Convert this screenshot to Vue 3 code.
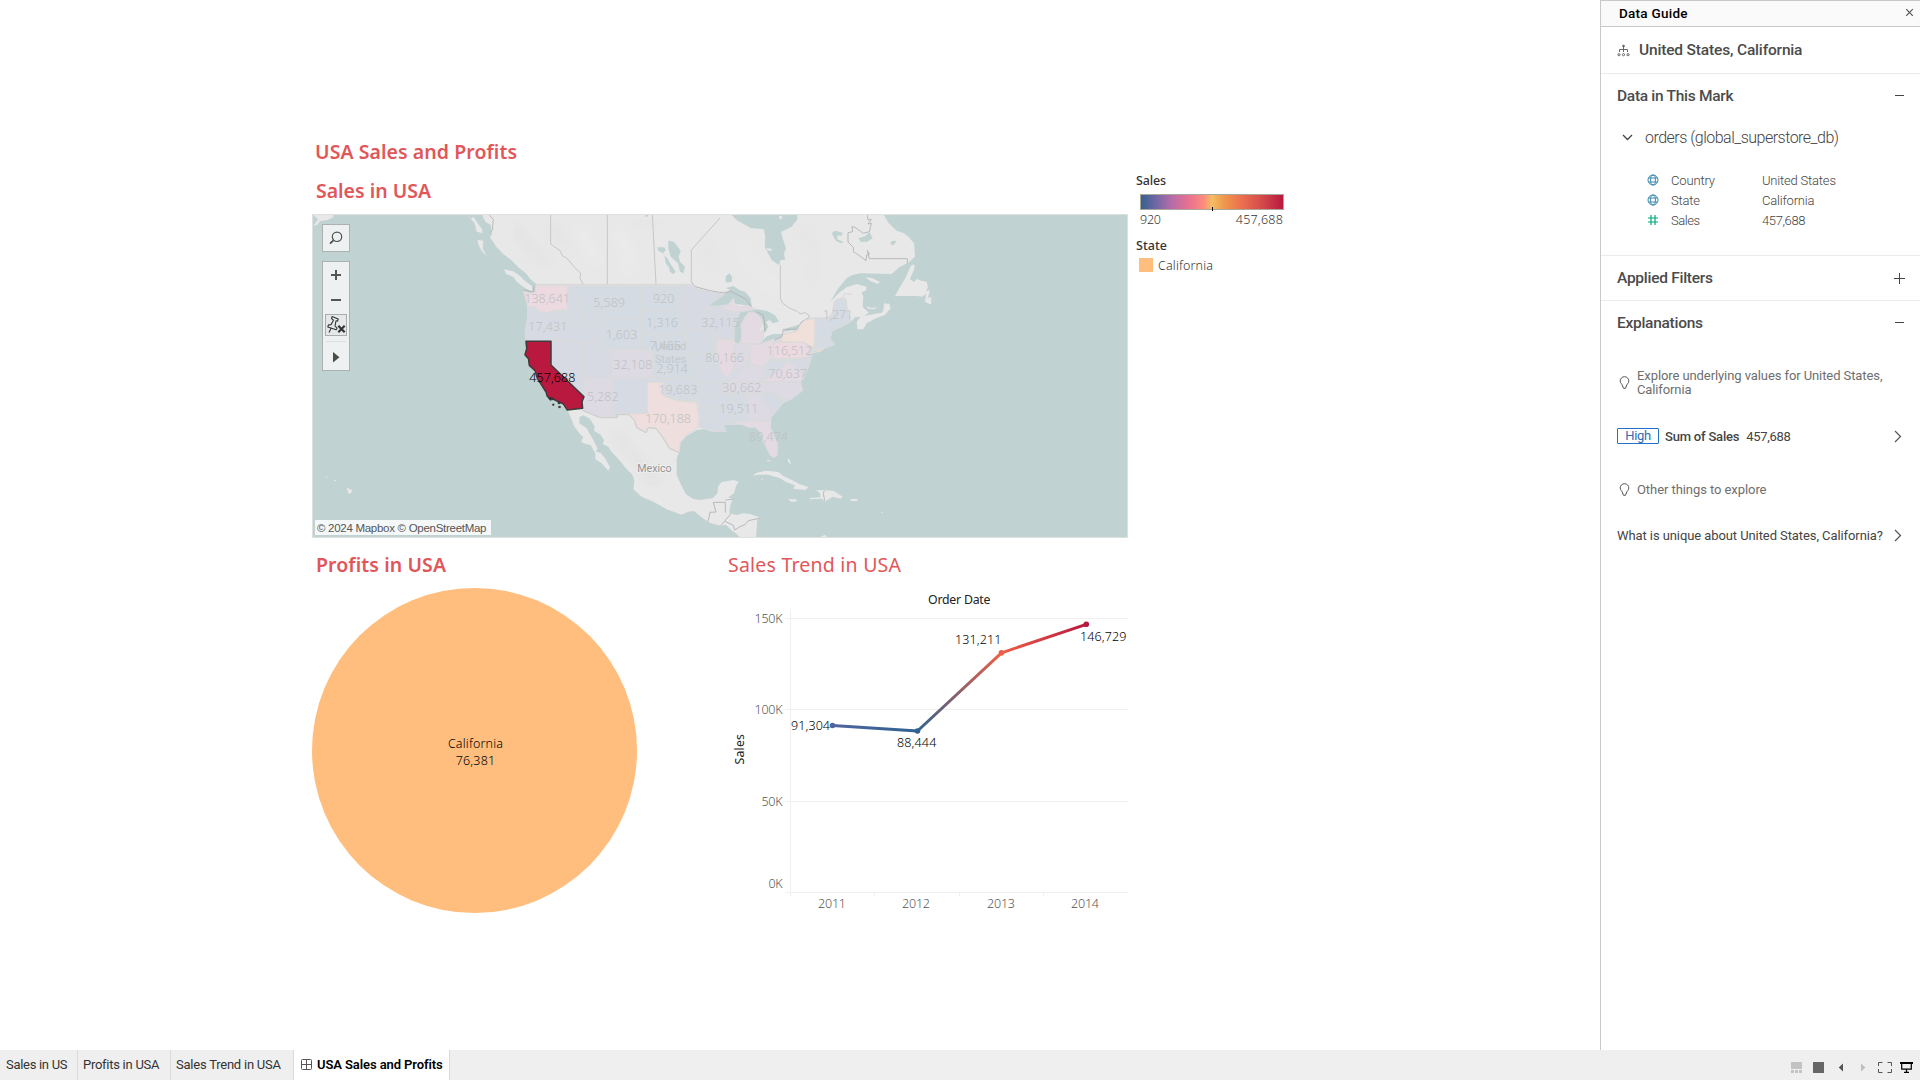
<script setup>
const vFit = {
  mounted(el, { value }) {
    const natural = el.getBoundingClientRect().width
    const gaps = el.textContent.trim().length - 1
    el.style.letterSpacing = `${((value - natural) / gaps).toFixed(3)}px`
  },
}

const blue = '#d4dbe3'
const blueGray = '#d6dbe3'
const slate = '#d8dae3'
const violet = '#dddae4'
const mauve = '#e4dae4'
const pink = '#e6dae2'

const states = [
  ['WA', '#ecdae0', '706,467 803,467 802,540 770,540 740,548 718,545 704,531 684,530 670,483 692,490 706,486'],
  ['OR', slate, '684,530 704,531 718,545 740,548 770,540 802,540 809,560 803,590 803,634 678,634 676,600 682,570'],
  ['ID', blueGray, '803,467 820,467 820,485 832,508 845,530 848,560 870,578 905,575 905,634 803,634 803,590 809,560 802,540'],
  ['MT', blue, '820,467 1023,467 1023,565 905,565 905,575 870,578 848,560 845,530 832,508 820,485'],
  ['WY', blue, '905,565 1023,565 1023,658 905,658'],
  ['NV', slate, '753,634 853,634 853,798 753,705'],
  ['UT', slate, '853,634 905,634 905,658 937,658 937,745 853,745'],
  ['CO', violet, '937,658 1058,658 1058,745 937,745'],
  ['AZ', violet, '853,745 937,745 937,862 900,862 848,840 846,815 852,800'],
  ['NM', blueGray, '937,745 1042,745 1042,850 985,852 955,852 952,862 937,862'],
  ['ND', blue, '1023,467 1142,467 1150,540 1023,540'],
  ['SD', blue, '1023,540 1150,540 1155,602 1152,618 1135,612 1023,612'],
  ['NE', blue, '1023,612 1135,612 1152,618 1165,650 1172,670 1178,682 1058,682 1058,658 1023,658'],
  ['KS', blue, '1058,682 1178,682 1187,700 1187,745 1058,745'],
  ['OK', blueGray, '1042,745 1188,747 1195,815 1150,812 1110,805 1090,795 1090,757 1042,757'],
  ['TX', '#eededd', '1042,757 1090,757 1090,797 1130,812 1190,817 1192,840 1199,860 1196,890 1160,915 1141,938 1138,968 1108,955 1090,925 1068,895 1045,893 1038,908 1010,893 1004,872 983,852 1042,850'],
  ['MN', slate, '1142,467 1175,465 1185,475 1240,487 1275,492 1235,520 1218,542 1215,572 1238,602 1155,602 1150,540'],
  ['IA', blueGray, '1155,602 1238,602 1248,635 1238,668 1165,668'],
  ['MO', blueGray, '1172,668 1240,668 1255,700 1280,730 1285,757 1188,757 1187,700'],
  ['AR', blueGray, '1188,757 1276,757 1262,790 1246,828 1195,828'],
  ['LA', blueGray, '1195,828 1244,828 1245,868 1268,872 1278,905 1250,905 1215,897 1196,890 1199,860'],
  ['WI', slate, '1218,542 1240,527 1260,533 1294,545 1308,568 1303,605 1302,626 1250,626 1238,602 1215,572'],
  ['IL', pink, '1250,628 1300,628 1304,640 1305,700 1295,725 1280,745 1262,720 1248,680'],
  ['IN', violet, '1304,642 1350,642 1350,690 1325,712 1298,725 1305,700'],
  ['MI', mauve, '1345,548 1360,546 1376,556 1387,570 1388,580 1376,602 1382,604 1390,598 1391,620 1382,641 1322,640 1326,605 1322,585 1334,562'],
  ['UP', mauve, '1262,536 1285,524 1298,506 1303,508 1298,523 1320,531 1340,527 1368,537 1340,543 1305,546 1285,540'],
  ['OH', pink, '1352,644 1380,643 1422,626 1422,670 1405,695 1385,712 1352,702'],
  ['KY', violet, '1280,757 1310,735 1335,712 1352,704 1385,712 1398,735 1370,757'],
  ['TN', violet, '1276,757 1405,757 1385,775 1358,790 1265,790'],
  ['MS', blueGray, '1248,790 1297,790 1303,880 1272,882 1245,870'],
  ['AL', blueGray, '1297,790 1340,790 1350,872 1308,874 1303,880'],
  ['GA', violet, '1340,790 1378,790 1415,845 1412,873 1350,872'],
  ['FL', mauve, '1308,875 1350,872 1405,874 1412,895 1432,940 1432,975 1422,983 1410,975 1388,930 1380,905 1365,892 1345,892 1325,882 1310,884'],
  ['SC', blueGray, '1378,790 1415,784 1450,815 1420,850 1400,825'],
  ['NC', violet, '1365,780 1405,757 1502,755 1508,782 1467,810 1445,808 1415,785 1378,790'],
  ['VA', mauve, '1380,755 1415,737 1440,715 1462,698 1476,704 1500,728 1514,742 1502,754'],
  ['WV', blueGray, '1385,712 1412,690 1462,697 1440,715 1415,737 1398,735'],
  ['PA', '#ecdae0', '1422,637 1514,637 1530,660 1520,683 1422,687'],
  ['MD', slate, '1460,687 1518,685 1538,665 1530,700 1518,730 1500,715 1485,700'],
  ['NY', '#f1dfd9', '1440,635 1452,612 1490,604 1500,585 1515,570 1545,565 1546,625 1540,655 1514,637'],
  ['VT', blue, '1546,565 1575,565 1595,555 1596,605 1590,625 1604,642 1588,650 1544,658'],
  ['ME', blue, '1592,565 1598,545 1604,520 1612,508 1638,506 1644,552 1655,574 1625,590 1597,602'],
]

const labels = [
  ['138,641', 673, 519, 137], ['5,589', 880, 531, 95], ['920', 1059, 519, 64],
  ['17,431', 685, 603, 117], ['1,603', 917, 627, 95], ['1,316', 1039, 591, 95],
  ['7,465', 1048, 660, 95], ['32,115', 1204, 592, 115], ['32,108', 940, 717, 117],
  ['2,914', 1069, 730, 95], ['80,166', 1216, 697, 116], ['5,282', 861, 812, 95],
  ['19,683', 1075, 793, 117], ['170,188', 1036, 879, 137], ['1,271', 1568, 567, 91],
  ['116,512', 1400, 676, 137], ['70,637', 1405, 745, 116], ['30,662', 1267, 787, 117],
  ['19,511', 1258, 850, 117], ['89,474', 1347, 934, 117],
]

const californiaShape = '678,634 753,634 753,705 852,800 846,815 848,835 802,840 790,822 765,810 742,800 738,786 712,745 705,722 688,706 685,686 675,674 680,655'

const gridLines = [618.5, 709.5, 801.5]
const yTicks = [['150K', 754.5, 623, 28], ['100K', 754.5, 714, 28], ['50K', 761.5, 806, 21], ['0K', 768.5, 888, 14]]
const years = [['2011', 818], ['2012', 902], ['2013', 987], ['2014', 1071]]
const values = [['91,304', 791, 730.3, 39], ['88,444', 897, 747.3, 39.3], ['131,211', 955, 644, 46.5], ['146,729', 1080, 641.3, 46.5]]

const fields = [
  { icon: 'globe', name: 'Country', nameW: 44, value: 'United States', valueW: 74 },
  { icon: 'globe', name: 'State', nameW: 29, value: 'California', valueW: 52.5 },
  { icon: 'hash', name: 'Sales', nameW: 29, value: '457,688', valueW: 43.5 },
]
</script>

<template>
  <div class="app">
    <div class="workspace">
      <main class="dashboard">
        <h1 class="title strong page-title"><span v-fit="202">USA Sales and Profits</span></h1>
        <div class="upper">
          <section class="map-block">
            <h2 class="title strong map-title"><span v-fit="115">Sales in USA</span></h2>
            <div class="map">
              <svg class="map-canvas" width="816" height="324" viewBox="36 252 2448 972">
                <defs>
                  <filter id="relief" x="0" y="0" width="100%" height="100%">
                    <feGaussianBlur stdDeviation="18" />
                  </filter>
                </defs>
                <rect x="36" y="252" width="2448" height="972" fill="#c0d2d1" />
                <g fill="#e8e8e8">
                  <path d="M545 252 L556 275 572 285 576 312 570 322 590 352 610 372 636 392 655 412 680 432 690 446 712 465 706 486 692 492 670 483 678 510 684 545 676 600 678 635 674 672 688 705 712 740 742 800 772 812 802 840 812 862 822 888 838 910 850 922 843 936 860 943 872 945 886 970 886 988 905 1000 925 1022 930 1012 915 985 902 968 888 965 892 955 880 930 860 895 838 880 838 862 850 856 870 866 884 890 882 902 902 914 912 930 908 942 925 950 935 966 960 992 980 1018 996 1032 1003 1050 1000 1078 1025 1100 1060 1115 1100 1138 1145 1154 1165 1145 1182 1143 1205 1162 1228 1178 1262 1187 1278 1184 1295 1202 1308 1210 1322 1224 L1368 1224 1372 1170 1378 1162 1350 1152 1330 1150 1310 1155 1288 1150 1290 1130 1298 1108 1285 1102 1302 1090 1308 1068 1316 1055 1300 1050 1265 1056 1255 1068 1252 1090 1238 1105 1200 1110 1180 1107 1158 1093 1142 1062 1130 1035 1130 985 1138 965 1140 940 1160 918 1190 900 1215 897 1230 904 1255 906 1266 898 1278 905 1270 885 1310 884 1325 884 1345 892 1365 892 1380 905 1388 930 1410 975 1422 983 1432 975 1432 940 1412 895 1412 865 1428 845 1450 818 1475 808 1500 788 1508 780 1502 750 1518 730 1522 705 1535 675 1542 662 1575 655 1604 645 1590 625 1597 603 1625 590 1655 574 1665 562 1690 560 1706 548 1688 530 1690 500 1685 487 1697 482 1700 470 1670 462 1640 472 1615 490 1592 515 1602 496 1615 475 1640 445 1655 436 1680 430 1775 432 1800 410 1825 398 1845 380 1842 340 1825 320 1812 310 1790 302 1765 278 1750 252Z" />
                  <path d="M612 418 L640 424 660 438 696 468 697 484 678 476 650 455 640 440 618 432Z M532 330 L550 332 548 355 559 377 546 364 536 346Z M500 252 L514 266 520 260 530 275 546 298 548 310 530 305 524 280 508 262Z M37 252 L98 252 100 262 82 270 60 274 52 284 40 288 54 268Z" />
                  <path d="M1842 402 L1832 408 1816 444 1796 478 1785 498 1850 498 1868 500 1878 492 1875 515 1893 524 1894 502 1884 504 1890 480 1878 484 1884 472 1880 455 1864 452 1850 446 1842 456 1830 446 1844 415Z M1696 442 L1716 444 1740 456 1734 462 1712 454Z M1670 575 L1682 560 1710 554 1745 548 1766 520 1772 535 1754 556 1728 565 1700 580 1690 598 1672 598Z M1700 528 L1714 534 1732 532 1722 538 1704 536Z M1752 520 L1770 522 1764 538 1750 545Z" />
                  <path d="M1358 1037 L1370 1028 1400 1022 1435 1026 1450 1038 1480 1052 1498 1062 1526 1072 1515 1080 1480 1076 1485 1066 1458 1056 1440 1045 1405 1034 1375 1034Z M1548 1080 L1600 1082 1628 1100 1622 1106 1598 1100 1576 1114 1565 1106 1530 1108 1530 1104 1562 1102 1560 1090Z M1464 1107 L1490 1108 1490 1114 1475 1116Z M1652 1107 L1672 1107 1672 1113 1652 1113Z M1462 984 L1470 990 1473 1004 1465 996Z M1400 994 h12 v-3 h-10Z M1562 1220 L1575 1214 1582 1224 1565 1224Z M1743 1145 h6 v3 h-6Z M1383 1046 h5 v3 h-5Z" />
                  <path d="M140 1073 L156 1080 154 1088 146 1092Z M119 1058 L128 1062 132 1065Z M102 1050 h6 v3 h-6Z M78 1040 h4 v3 h-4Z" />
                </g>
                <g filter="url(#relief)" fill="none" stroke-width="22" stroke-linecap="round">
                  <path d="M640 290 L690 350 740 400 M760 290 L790 340" stroke="#e2e2e2" />
                  <path d="M840 300 L890 390 M960 300 L990 420" stroke="#ececec" />
                  <path d="M1000 270 H1070 M1215 320 L1240 420 M1500 290 L1560 380 1530 450" stroke="#e5e5e5" />
                  <path d="M950 910 L985 960 1030 1010 1070 1070" stroke="#e1e1e1" />
                  <path d="M1320 340 L1370 430 1440 490" stroke="#ebebeb" />
                </g>
                <g fill="#c0d2d1">
                  <path d="M1292 252 L1310 270 1335 284 1352 294 1392 298 1396 320 1394 350 1402 365 1415 390 1437 405 1442 390 1455 390 1452 370 1458 355 1448 325 1443 306 1475 290 1492 268 1492 252Z" />
                  <path d="M1105 332 L1122 335 1142 362 1136 380 1140 395 1155 410 1150 430 1140 425 1134 400 1112 380 1105 355Z M1072 352 L1092 352 1098 360 1088 370 1104 388 1110 400 1127 425 1120 433 1110 425 1106 410 1098 402 1092 372 1075 362Z M1276 452 L1278 438 1288 430 1296 440 1296 455 1282 458Z" />
                </g>
                <path d="M1240 487 L1290 483 1300 545 1325 541 1322 640 1380 642 1446 620 1500 590 1515 570 1596 565 1597 603 1590 625 1604 642 1542 660 1535 675 1518 730 1502 750 1508 780 1475 808 1450 816 1412 865 1412 873 1310 884 1270 885 1245 868 1195 828 1188 757 1155 602 1215 572Z" fill="#d7dbe3" />
                <g fill="#c0d2d1">
                  <path d="M1228 527 L1252 505 1280 490 1290 480 1278 474 1300 468 1318 480 1336 486 1352 505 1355 530 1340 526 1305 522 1300 505 1283 523 1258 526Z" />
                  <path d="M1342 543 L1325 541 1314 562 1302 605 1305 635 1315 642 1326 625 1322 590 1334 560 1348 548 1362 548 1380 560 1388 575 1394 610 1405 590 1398 575 1410 570 1418 580 1437 575 1425 556 1402 543 1372 538Z" />
                  <path d="M1380 642 L1390 625 1400 618 1420 612 1445 612 1448 618 1415 632 1395 645Z M1448 606 L1460 594 1490 586 1500 583 1492 597 1450 606Z M664 436 L676 440 700 465 690 464 668 447Z" />
                  <path d="M1595 310 L1605 302 1628 308 1625 318 1612 316 1612 328 1630 335 1625 340 1608 333Z M1675 325 L1696 318 1708 306 1718 325 1700 336 1682 335Z M1772 335 L1780 332 1790 332 1782 344 1772 344Z M1035 252 H1048 L1042 260 1035 260Z" />
                </g>
                <path d="M1380 620 L1394 612 1405 592 1415 582 1438 577 1450 580 1470 565 1500 560 1512 562 1500 583 1460 594 1448 606 1440 612 1418 612 1398 620 1384 638Z" fill="#e8e8e8" />
                <path d="M1436 259 l8 -2 4 6 -8 6Z M1401 355 l16 2 -4 6 -12 -2Z" fill="#e8e8e8" />
                <g fill="none" stroke="#b0b0b0" stroke-width="2.5" stroke-linejoin="round">
                  <path d="M752 252 V342 L780 362 788 378 800 384 824 412 842 430 840 445 850 463 M922 252 V463 M1057 252 L1068 463 M1260 264 L1174 360 V456 M1441 405 V505 L1448 520 1470 535 1492 544 1500 552 1515 548 1528 556 1525 564" stroke="#bfbfbf" />
                  <path d="M710 463 H1174 M1528 564 H1594 L1604 512 1630 502 1634 490 1655 494" stroke="#d4d4d4" />
                  <path d="M1174 456 L1185 470 1230 482 1275 490 1290 483 1335 506 1355 530 M1370 545 L1390 556 1394 585 1395 605 M1380 640 L1395 643 1446 620 1450 598 1490 598 1504 576 1525 564 M670 480 L700 486 703 467 M565 252 L580 268 577 300 570 308" />
                  <path d="M1702 252 L1704 270 1714 268 1704 282 1714 280 1708 305 1690 310 1665 292 1656 290 1658 305 1644 308 1644 336 1660 352 1660 365 1680 378 1698 392 1700 375 1708 372 1702 362 1708 386 H1822 V400" />
                  <path d="M1240 1117 H1276 V1148 M1240 1117 L1248 1146 1230 1147 1224 1175 M1276 1110 L1298 1108 M1262 1187 L1275 1172 1292 1152 M1275 1174 L1300 1186 1304 1200 1320 1190 1335 1184 1345 1172 1378 1165 M1573 1082 L1570 1090 1574 1112" />
                </g>
                <g stroke="#dadbd9" stroke-width="3" stroke-linejoin="round">
                  <polygon v-for="[id, fill, points] in states" :key="id" :points="points" :fill="fill" />
                  <path d="M1540 668 L1572 656 1560 664Z" fill="#f1dfd9" stroke="#ecdad4" />
                </g>
                <g class="basemap-text">
                  <text x="1064" y="661" textLength="95" lengthAdjust="spacingAndGlyphs">United</text>
                  <text x="1064" y="699" textLength="95" lengthAdjust="spacingAndGlyphs">States</text>
                </g>
                <g class="mark-labels">
                  <text v-for="[text, x, y, w] in labels" :key="text" :x="x" :y="y" :textLength="w">{{ text }}</text>
                </g>
                <path d="M985 852 L1004 872 1010 893 1038 908 1045 893 1068 895 1090 925 1108 955 1136 967 M848 842 L900 863 H952 V854 H985" fill="none" stroke="#c8c8c8" stroke-width="2.5" />
                <text class="country" x="1012" y="1025" textLength="103" lengthAdjust="spacingAndGlyphs">Mexico</text>
                <polygon :points="californiaShape" fill="#b9183f" stroke="#3c3c3c" stroke-width="4.5" stroke-linejoin="round" />
                <path d="M744 803 l14 0 4 5 -12 3Z M758 822 h4 v4 h-4Z M774 816 h6 v5 h-6Z M776 829 h5 v4 h-5Z" fill="#333" stroke="#333" stroke-width="2" />
                <text class="selected-label" x="688" y="756" textLength="138">457,688</text>
                <rect x="37.5" y="253.5" width="2445" height="969" fill="none" stroke="#dfe1e1" stroke-width="3" />
              </svg>
              <div class="map-tools">
                <div class="tool-box search">
                  <svg width="26" height="26" viewBox="0 0 26 26" fill="none" stroke="#4c4c4c">
                    <circle cx="14" cy="11.800" r="4.7" stroke-width="1.2" />
                    <path d="M10.400 15.400 L7 18.600" stroke-width="1.7" />
                  </svg>
                </div>
                <div class="tool-box">
                  <svg width="26" height="108" viewBox="0 0 26 108">
                    <path d="M8 13 H18 M13 8 V18 M8 38 H18" stroke="#555" stroke-width="2" />
                    <rect x="2.5" y="52.5" width="21" height="21" fill="#e4e8e8" stroke="#a9adad" />
                    <g fill="none" stroke="#333" stroke-width="1.1" stroke-linejoin="round">
                      <path d="M9 54.600 L15.200 57 14.600 59 13 58.800 12 64 14 66.200 13.200 67.800 4.800 65 5.500 62.900 8 62.800 10.400 58.200 8.600 56.500Z" />
                      <path d="M8.2 66 L6 70.600" />
                    </g>
                    <path d="M15.3 63.8 L21.7 70.2 M21.7 63.8 L15.3 70.2" stroke="#333" stroke-width="2.2" />
                    <path d="M3 79.5 H23" stroke="#dadede" />
                    <path d="M10 90 L16.5 95.2 10 100.5Z" fill="#4c4c4c" />
                  </svg>
                </div>
              </div>
              <div class="attribution"><span v-fit="169.5">© 2024 Mapbox © OpenStreetMap</span></div>
            </div>
          </section>
          <aside class="legends">
            <div class="legend-title"><span v-fit="30">Sales</span></div>
            <div class="ramp"><i class="ramp-mark"></i></div>
            <div class="ramp-range"><span v-fit="21">920</span><span v-fit="47">457,688</span></div>
            <div class="legend-title state"><span v-fit="31">State</span></div>
            <div class="legend-item"><i class="swatch"></i><span v-fit="55">California</span></div>
          </aside>
        </div>
        <div class="lower">
          <section class="profits">
            <h2 class="title strong"><span v-fit="130">Profits in USA</span></h2>
            <div class="pie">
              <span v-fit="55">California</span>
              <span v-fit="39.5">76,381</span>
            </div>
          </section>
          <section class="trend">
            <h2 class="title"><span v-fit="173">Sales Trend in USA</span></h2>
            <svg width="408" height="330" viewBox="720 590 408 330">
              <defs>
                <linearGradient id="s1" x1="832" y1="0" x2="917" y2="0" gradientUnits="userSpaceOnUse"><stop stop-color="#4e659f" /><stop offset="1" stop-color="#2f628f" /></linearGradient>
                <linearGradient id="s2" x1="917" y1="0" x2="1001" y2="0" gradientUnits="userSpaceOnUse"><stop stop-color="#2f628f" /><stop offset="1" stop-color="#ee5f47" /></linearGradient>
                <linearGradient id="s3" x1="1001" y1="0" x2="1086" y2="0" gradientUnits="userSpaceOnUse"><stop stop-color="#ee5f47" /><stop offset="1" stop-color="#b9183f" /></linearGradient>
              </defs>
              <g stroke="#f0f0f0">
                <path v-for="y in gridLines" :key="y" :d="`M785 ${y} H1128`" />
                <path d="M785 892.5 H1128 M790.5 609 V896 M874.5 892 V896 M959.5 892 V896 M1043.5 892 V896" />
              </g>
              <g stroke-width="3" stroke-linecap="round">
                <path d="M832.5 725.5 L917.5 731" stroke="url(#s1)" />
                <path d="M917.5 731 L1001.5 652.8" stroke="url(#s2)" />
                <path d="M1001.5 652.8 L1086.3 624.3" stroke="url(#s3)" />
              </g>
              <circle cx="832.5" cy="725.5" r="2.8" fill="#4e659f" />
              <circle cx="917.5" cy="731" r="2.8" fill="#2f628f" />
              <circle cx="1001.5" cy="652.8" r="2.8" fill="#ee5f47" />
              <circle cx="1086.3" cy="624.3" r="2.8" fill="#b9183f" />
              <g class="tick">
                <text v-for="[t, x, y, w] in yTicks" :key="t" :x="x" :y="y" :textLength="w">{{ t }}</text>
                <text v-for="[t, x] in years" :key="t" :x="x" y="908" textLength="28">{{ t }}</text>
              </g>
              <g class="value">
                <text v-for="[t, x, y, w] in values" :key="t" :x="x" :y="y" :textLength="w">{{ t }}</text>
              </g>
              <g class="axis">
                <text x="928" y="604" textLength="62.5">Order Date</text>
                <text transform="translate(744 764.5) rotate(-90)" textLength="30.5">Sales</text>
              </g>
            </svg>
          </section>
        </div>
      </main>

      <aside class="guide">
        <header class="guide-bar">
          <span v-fit="68.5">Data Guide</span>
          <svg width="9" height="9" viewBox="0 0 9 9"><path d="M1.2 1.2 L7.8 7.8 M7.8 1.2 L1.2 7.8" stroke="#555" stroke-width="1.2" /></svg>
        </header>
        <div class="context">
          <svg width="13" height="13" viewBox="0 0 13 13" fill="none" stroke="#666">
            <circle cx="6.5" cy="2" r="1.3" fill="#666" stroke="none" />
            <path d="M6.5 3 V8 M2.5 8 V5.5 H10.5 V8" />
            <circle cx="2" cy="10.7" r="1.1" /><circle cx="6.5" cy="10.7" r="1.1" /><circle cx="11" cy="10.7" r="1.1" />
          </svg>
          <span v-fit="163.5">United States, California</span>
        </div>
        <section class="mark-data">
          <div class="section-head">
            <span v-fit="116.5">Data in This Mark</span>
            <svg width="11" height="11"><path d="M1 4.5 H10" stroke="#444" /></svg>
          </div>
          <div class="source">
            <svg width="11" height="7" viewBox="0 0 11 7" fill="none" stroke="#444" stroke-width="1.3"><path d="M1 1 L5.5 5.5 10 1" /></svg>
            <span v-fit="194">orders (global_superstore_db)</span>
          </div>
          <div class="fields">
            <div v-for="f in fields" :key="f.name" class="field">
              <svg v-if="f.icon === 'globe'" width="12" height="12" viewBox="0 0 12 12" fill="none" stroke="#3c88ad">
                <circle cx="6" cy="6" r="5" /><ellipse cx="6" cy="6" rx="2.4" ry="5" /><path d="M1.5 4 H10.5 M1.5 8 H10.5" />
              </svg>
              <svg v-else width="12" height="12" viewBox="0 0 12 12" fill="none" stroke="#00a97c" stroke-width="1.2"><path d="M4 1 V11 M8 1 V11 M1 4 H11 M1 8 H11" /></svg>
              <div class="field-name"><span v-fit="f.nameW">{{ f.name }}</span></div>
              <span v-fit="f.valueW">{{ f.value }}</span>
            </div>
          </div>
        </section>
        <div class="section-head filters">
          <span v-fit="96">Applied Filters</span>
          <svg width="11" height="11"><path d="M0 5.5 H11 M5.5 0 V11" stroke="#444" /></svg>
        </div>
        <section class="explanations">
          <div class="section-head">
            <span v-fit="86">Explanations</span>
            <svg width="11" height="11"><path d="M1 4.5 H10" stroke="#444" /></svg>
          </div>
          <div class="hint first">
            <svg width="11" height="14" viewBox="0 0 11 14" fill="none" stroke="#555"><path d="M3.6 10.2 C3.4 8 1.2 7.3 1.2 4.9 A4.3 4.2 0 0 1 9.8 4.9 C9.8 7.3 7.6 8 7.4 10.2 M3.6 10 L4.5 12.3 H6.5 L7.4 10" /></svg>
            <div><span v-fit="245.5">Explore underlying values for United States,</span><br /><span v-fit="54.5">California</span></div>
          </div>
          <div class="link-row high-row">
            <div class="badge"><span v-fit="26">High</span></div>
            <b class="measure"><span v-fit="74.5">Sum of Sales</span></b>
            <span v-fit="44.5">457,688</span>
            <svg class="go" width="8" height="13" viewBox="0 0 8 13" fill="none" stroke="#555" stroke-width="1.2"><path d="M1 1 L6.5 6.5 1 12" /></svg>
          </div>
          <div class="hint">
            <svg width="11" height="14" viewBox="0 0 11 14" fill="none" stroke="#555"><path d="M3.6 10.2 C3.4 8 1.2 7.3 1.2 4.9 A4.3 4.2 0 0 1 9.8 4.9 C9.8 7.3 7.6 8 7.4 10.2 M3.6 10 L4.5 12.3 H6.5 L7.4 10" /></svg>
            <span v-fit="129.5">Other things to explore</span>
          </div>
          <div class="link-row">
            <span v-fit="266">What is unique about United States, California?</span>
            <svg class="go" width="8" height="13" viewBox="0 0 8 13" fill="none" stroke="#555" stroke-width="1.2"><path d="M1 1 L6.5 6.5 1 12" /></svg>
          </div>
        </section>
      </aside>
    </div>

    <footer class="tabs">
      <div class="tab sales"><span v-fit="61.5">Sales in US</span></div>
      <div class="tab profits-tab"><span v-fit="76">Profits in USA</span></div>
      <div class="tab trend-tab"><span v-fit="105">Sales Trend in USA</span></div>
      <div class="tab active">
        <svg width="11" height="11" viewBox="0 0 11 11" fill="none" stroke="#555"><rect x=".5" y=".5" width="10" height="10" rx="1" /><path d="M5.5 0 V11 M0 5.5 H11" /></svg>
        <span v-fit="125.5">USA Sales and Profits</span>
      </div>
      <svg class="view-icons" width="124" height="14" viewBox="1791 1060 124 14">
        <path d="M1791 1062 h11 v7 h-11Z M1791 1070 h3 v3 h-3Z M1795 1070 h3 v3 h-3Z M1799 1070 h3 v3 h-3Z" fill="#c3c3c3" />
        <rect x="1813" y="1062" width="11" height="11" fill="#666" />
        <path d="M1843 1063.5 V1071.5 L1838.7 1067.5Z" fill="#555" />
        <path d="M1861 1063.5 V1071.5 L1865.3 1067.5Z" fill="#bdbdbd" />
        <path d="M1878.5 1066 V1062.5 H1882.5 M1887.5 1062.5 H1891.5 V1066 M1891.5 1069 V1072.5 H1887.5 M1882.5 1072.5 H1878.5 V1069" fill="none" stroke="#555" />
        <path d="M1900 1063 H1913" stroke="#000" stroke-width="2" />
        <path d="M1901.7 1063 V1069.2 H1911.3 V1063 M1906.5 1069 V1072 M1904 1072.4 H1909" fill="none" stroke="#000" stroke-width="1.2" />
      </svg>
    </footer>
  </div>
</template>

<style>
body { margin: 0; background: #fff; }
</style>

<style scoped>
.app { width: 1920px; height: 1080px; display: flex; flex-direction: column; overflow: hidden; font-family: Roboto, "Noto Sans", sans-serif; color: #4b4b4b; }
.app span { display: inline-block; white-space: nowrap; }
.app svg { display: block; flex: none; }
.workspace { display: flex; height: 1050px; }

.dashboard { width: 1288px; padding: 137px 0 0 312px; font-family: "Noto Sans", sans-serif; color: #333; font-size: 12.5px; }
.title { margin: 0; height: 30px; line-height: 30px; font-size: 19.5px; font-weight: 400; color: #e15759; padding-left: 4px; }
.title.strong { font-weight: 600; }
.title.page-title { padding-left: 3px; }
.upper { display: flex; }
.map-block { width: 816px; }
.map-title { height: 38px; padding-top: 9px; }
.map { position: relative; width: 816px; height: 324px; }
.basemap-text { font: 33px Roboto, sans-serif; fill: #c3c9ce; }
.mark-labels { font-size: 37.5px; font-weight: 300; fill: #bfc1c4; }
.selected-label { font-size: 37.5px; font-weight: 300; fill: #000; }
.country { font: 34px Roboto, sans-serif; fill: #949494; stroke: #f2f2f2; stroke-width: 4px; paint-order: stroke; }
.map-tools { position: absolute; left: 10px; top: 10px; display: flex; flex-direction: column; gap: 9px; }
.tool-box { width: 26px; border: 1px solid #acb0b0; background: #eef1f1; }
.attribution { position: absolute; left: 3px; bottom: 3px; width: 176px; height: 15px; box-sizing: border-box; padding-left: 2px; line-height: 16px; background: #f5f8f8; font-family: "Liberation Sans", sans-serif; font-size: 11.5px; color: #555; }

.legends { width: 160px; padding: 5px 0 0 8px; box-sizing: border-box; }
.legend-title { height: 17px; line-height: 17px; font-weight: 500; }
.ramp { position: relative; width: 142px; height: 14px; margin: 5px 0 0 4px; border: 1px solid #aaa79a; background: linear-gradient(90deg, #35618f 0%, #7368a5 11%, #b96ca7 22%, #e9728f 34%, #ff8a7c 44%, #f5bd62 50%, #ee9a4d 58%, #ed724e 70%, #d64e4b 84%, #b9183f 100%); }
.ramp-mark { position: absolute; left: 71px; top: 12px; width: 1px; height: 4px; background: #000; }
.ramp-range { width: 143px; margin-left: 4px; height: 20px; line-height: 20px; display: flex; justify-content: space-between; font-weight: 300; }
.legend-title.state { margin-top: 7px; }
.legend-item { display: flex; align-items: center; gap: 5px; height: 20px; margin: 1px 0 0 3px; font-weight: 300; }
.swatch { width: 14px; height: 14px; background: #ffbe7d; }

.lower { display: flex; padding-top: 12px; }
.profits { width: 412px; }
.profits .title { height: 38px; }
.pie { width: 325px; height: 325px; border-radius: 50%; background: #ffbe7d; display: flex; flex-direction: column; align-items: center; justify-content: center; line-height: 17px; font-weight: 300; color: #000; padding: 2px 0 0 2px; box-sizing: border-box; }
.trend { width: 408px; margin-left: -4px; }
.trend .title { height: 40px; padding-left: 8px; }
.tick { font-size: 12.5px; font-weight: 300; fill: #555; }
.value { font-size: 12.5px; font-weight: 300; fill: #000; }
.axis { font-size: 12.3px; font-weight: 400; fill: #222; }

.guide { width: 320px; height: 1050px; box-sizing: border-box; border-left: 1px solid #c9c9c9; font-size: 13px; }
.guide-bar { height: 27px; box-sizing: border-box; border-top: 1px solid #c9c9c9; border-bottom: 1px solid #c9c9c9; background: #fafafa; display: flex; align-items: center; justify-content: space-between; padding: 0 6px 2px 18px; font-size: 13.5px; font-weight: 500; color: #000; }
.context { height: 47px; box-sizing: border-box; display: flex; align-items: center; gap: 9px; padding-left: 16px; border-bottom: 1px solid #ebebeb; font-size: 15.5px; font-weight: 500; }
.section-head { height: 44px; display: flex; align-items: center; justify-content: space-between; padding: 0 15px 0 16px; font-size: 15.5px; font-weight: 500; }
.mark-data { height: 181px; border-bottom: 1px solid #ebebeb; }
.source { height: 38px; padding-bottom: 2px; display: flex; align-items: center; gap: 12px; padding-left: 21px; font-size: 16px; font-weight: 300; color: #444; }
.fields { padding-top: 12px; font-weight: 300; color: #444; }
.field { height: 20px; display: flex; align-items: center; padding-left: 46px; }
.field-name { width: 103px; padding-left: 12px; box-sizing: border-box; }
.filters { border-bottom: 1px solid #ebebeb; }
.hint { height: 42px; display: flex; align-items: center; gap: 7px; padding-left: 18px; color: #6e6e6e; line-height: 14px; }
.hint.first { margin-top: 17px; }
.link-row { height: 40px; display: flex; align-items: center; padding: 0 18px 0 16px; margin-top: 4px; color: #444; }
.high-row { margin: 12px 0 13px; }
.badge { width: 40px; height: 14px; line-height: 14px; text-align: center; border: 1px solid #2171c7; border-radius: 1px; color: #2e6cb8; }
.measure { font-weight: 500; padding: 0 7px 0 6px; }
.go { margin-left: auto; }

.tabs { height: 30px; display: flex; background: #efefef; font-size: 13px; color: #333; }
.tab { box-sizing: border-box; height: 30px; display: flex; align-items: center; border-right: 1px solid #dadada; padding: 0 0 1px 6px; }
.sales { width: 78px; }
.profits-tab { width: 93px; padding-left: 5px; }
.trend-tab { width: 123px; padding-left: 5px; }
.active { width: 156px; padding-left: 7px; gap: 5px; background: #fff; font-weight: 600; color: #000; }
.view-icons { margin: 10px 5px 0 auto; }
</style>
